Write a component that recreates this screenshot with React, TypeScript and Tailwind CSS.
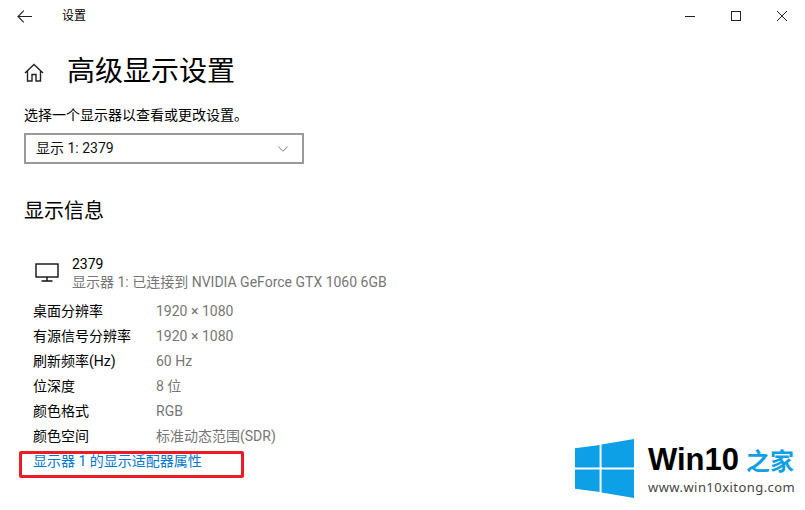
import { ChevronDown } from "lucide-react";

const rows = [
	["桌面分辨率", "1920 × 1080"],
	["有源信号分辨率", "1920 × 1080"],
	["刷新频率(Hz)", "60 Hz"],
	["位深度", "8 位"],
	["颜色格式", "RGB"],
	["颜色空间", "标准动态范围(SDR)"],
];

const BackIcon = () => (
	<svg width="15" height="13" viewBox="0 0 15 13" fill="none" stroke="#222" strokeWidth="1.1">
		<path d="M15 6.500H1M6.800.700 1 6.500l5.800 5.800" />
	</svg>
);

const HomeIcon = () => (
	<svg width="20" height="19" viewBox="0 0 20 19" fill="none" stroke="#222" strokeWidth="1.4">
		<path d="M1 10 10 1.500 19 10M3.500 8v10h4.500v-6.500h4V18h4.500V8" />
	</svg>
);

const WindowControls = () => (
	<div className="ml-auto flex items-center gap-[36px] pr-[18px]">
		<svg width="10" height="10" viewBox="0 0 10 10" stroke="#222" strokeWidth="1">
			<path d="M0 5.500h10" />
		</svg>
		<svg width="10" height="10" viewBox="0 0 10 10" fill="none" stroke="#222" strokeWidth="1">
			<rect x=".5" y=".5" width="9" height="9" />
		</svg>
		<svg width="10" height="10" viewBox="0 0 10 10" stroke="#222" strokeWidth="1">
			<path d="M0 0l10 10M10 0 0 10" />
		</svg>
	</div>
);

const MonitorIcon = () => (
	<svg width="24" height="20" viewBox="0 0 24 20" fill="none" stroke="#111" strokeWidth="1.4">
		<rect x="1" y="1" width="22" height="13" />
		<path d="M12 14v3.500M6.500 18h11" />
	</svg>
);

const WinLogo = () => (
	<svg width="59" height="59" viewBox="0 0 60 60" fill="#0ea0e6">
		<path d="M0 9.500 25 6v23H0zM27 5.700 60 0v29H27zM0 31h25v23L0 50.500zM27 31h33v29l-33-5.500z" />
	</svg>
);

const Watermark = () => (
	<div className="absolute left-[575px] top-[439px] flex items-center gap-[14px] bg-white pr-[12px]">
		<WinLogo />
		<div className="flex flex-col">
			<div className="flex items-center h-[36px] gap-[7px]">
				<span className="text-[31px] font-bold text-black leading-none font-['Liberation_Sans',sans-serif]">Win10</span>
				<span className="text-[24px] font-bold text-[#0ea0e6] leading-none font-['Noto_Sans_CJK_SC',sans-serif]">之家</span>
			</div>
			<span className="text-[13px] leading-[18px] tracking-[0.45px] text-[#444] font-['Noto_Sans',sans-serif]">www.win10xitong.com</span>
		</div>
	</div>
);

export default function App() {
	return (
		<div className="relative w-[805px] h-[510px] overflow-hidden bg-white text-[14px] text-black font-['Roboto','Noto_Sans_CJK_SC',sans-serif]">
			<div className="flex items-center h-[32px] pl-[17px]">
				<BackIcon />
				<span className="ml-[30px] text-[12px]">设置</span>
				<WindowControls />
			</div>
			<div className="pl-[24px]">
				<div className="flex items-center h-[56px] mt-[12px]">
					<HomeIcon />
					<h1 className="ml-[23px] text-[28px] font-normal leading-none">高级显示设置</h1>
				</div>
				<p className="mt-[4px] h-[22px] leading-[22px]">选择一个显示器以查看或更改设置。</p>
				<div className="mt-[7px] flex items-center justify-between w-[280px] h-[31px] border-2 border-[#999] pl-[10px] pr-[10px]">
					<span className="text-[#111]">显示 1: 2379</span>
					<ChevronDown size={18} strokeWidth={1} className="text-[#555]" />
				</div>
				<h2 className="mt-[32px] text-[20px] font-normal leading-[30px]">显示信息</h2>
				<div className="mt-[29px] ml-[11px] flex gap-[13px]">
					<div className="pt-[8px]">
						<MonitorIcon />
					</div>
					<div className="flex flex-col leading-[18px]">
						<span>2379</span>
						<span className="text-[#767676]">显示器 1: 已连接到 NVIDIA GeForce GTX 1060 6GB</span>
					</div>
				</div>
				<div className="mt-[8px] ml-[9px] flex flex-col">
					{rows.map(([label, value]) => (
						<div key={label} className="flex items-center h-[25px]">
							<span className="w-[123px]">{label}</span>
							<span className="text-[#767676]">{value}</span>
						</div>
					))}
					<a className="flex items-center h-[25px] text-[#0078d7]">显示器 1 的显示适配器属性</a>
				</div>
			</div>
			<div className="absolute left-[19px] top-[451px] w-[225px] h-[27px] border-[3px] border-[#ed1c24] rounded-[2px]" />
			<Watermark />
		</div>
	);
}
